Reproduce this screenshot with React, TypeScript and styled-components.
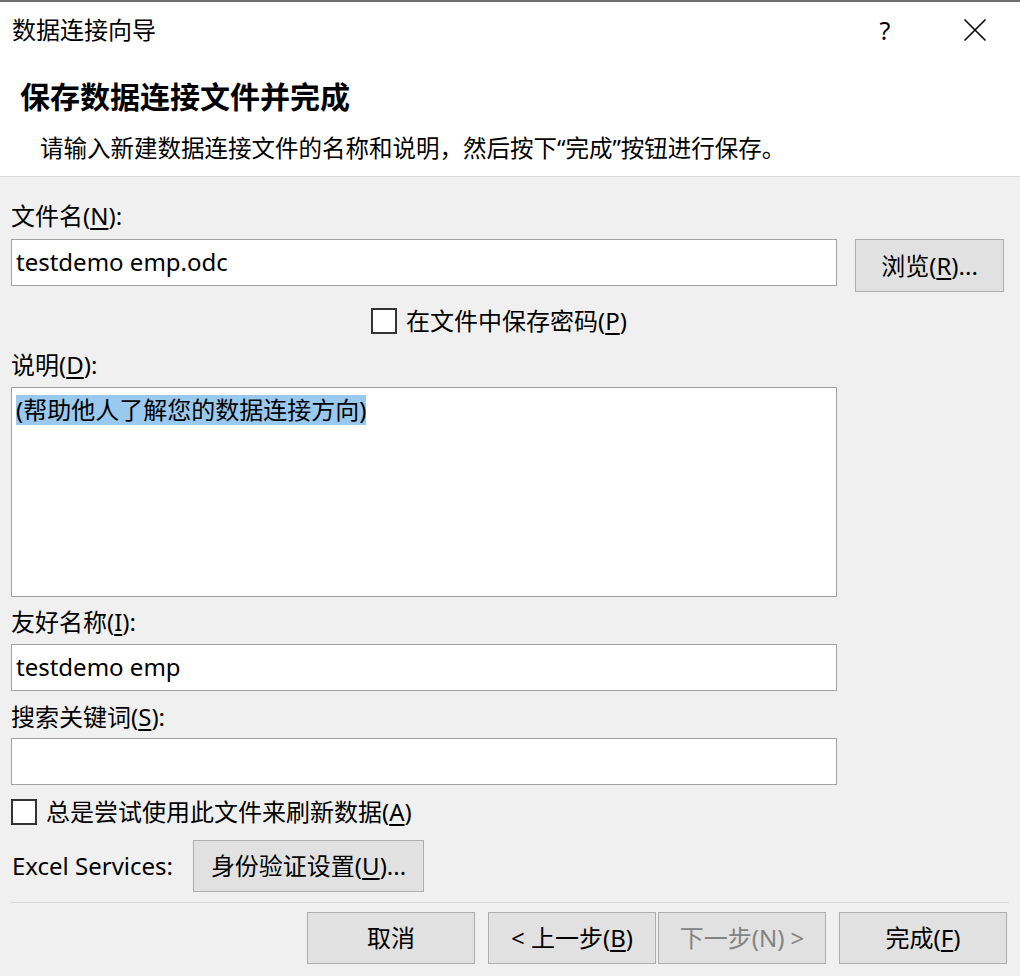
import React from 'react'
import styled, { createGlobalStyle } from 'styled-components'

const GlobalStyle = createGlobalStyle`
  html, body {
    margin: 0;
    padding: 0;
    background: #f0f0f0;
  }
  body {
    font-family: "Noto Sans", "Noto Sans CJK SC", sans-serif;
    color: #000;
  }
`

const Dialog = styled.div`
  width: 1020px;
  height: 976px;
  display: flex;
  flex-direction: column;
  background: #f0f0f0;
  overflow: hidden;
`

const BackdropStrip = styled.div`
  height: 2px;
  background: #6e6e6e;
`

const Header = styled.div`
  background: #fff;
  border-bottom: 1px solid #dadada;
  padding-bottom: 12px;
`

const TitleBar = styled.div`
  height: 56px;
  display: flex;
  align-items: center;
  padding-left: 12px;
`

const TitleText = styled.div`
  flex: 1;
  font-size: 24px;
  line-height: 32px;
`

const TitleButton = styled.div`
  width: 90px;
  height: 56px;
  display: flex;
  align-items: center;
  justify-content: center;
  font-size: 25px;
  line-height: 32px;
`

const Heading = styled.h1`
  margin: 19px 0 0 20px;
  font-size: 30px;
  line-height: 40px;
  font-weight: bold;
`

const Subtitle = styled.p`
  margin: 15px 0 0 40px;
  font-size: 23.5px;
  line-height: 32px;
`

const Body = styled.div`
  padding: 0 11px;
`

const Label = styled.div<{ $top: number }>`
  margin-top: ${(p) => p.$top}px;
  font-size: 24px;
  line-height: 32px;
  height: 32px;
`

const Key = styled.u`
  text-underline-offset: 3px;
`

const Row = styled.div<{ $top: number }>`
  margin-top: ${(p) => p.$top}px;
  display: flex;
  align-items: flex-start;
`

const TextBox = styled.div<{ $height?: number }>`
  box-sizing: border-box;
  width: 826px;
  height: ${(p) => p.$height ?? 47}px;
  background: #fff;
  border: 1px solid #a0a0a0;
  padding: 5px 4px;
  font-size: 24px;
  line-height: 34px;
`

const Selected = styled.span`
  background: #99c9ef;
  line-height: 30px;
  display: inline-block;
`

const Button = styled.div<{ $width?: number; $disabled?: boolean }>`
  box-sizing: border-box;
  width: ${(p) => p.$width ?? 168}px;
  height: 52px;
  background: #e1e1e1;
  border: 1px solid #adadad;
  display: flex;
  align-items: center;
  justify-content: center;
  font-size: 24px;
  line-height: 32px;
  color: ${(p) => (p.$disabled ? '#838383' : '#000')};
  white-space: nowrap;
`

const CheckRow = styled.label<{ $top: number; $indent: number }>`
  margin-top: ${(p) => p.$top}px;
  padding-left: ${(p) => p.$indent}px;
  display: flex;
  align-items: center;
  height: 32px;
  font-size: 24px;
  line-height: 32px;
`

const CheckBox = styled.span`
  box-sizing: border-box;
  width: 26px;
  height: 26px;
  border: 2px solid #333;
  background: #fff;
  margin-right: 9px;
  flex: none;
`

const ServicesLabel = styled.div`
  width: 181px;
  font-size: 24px;
  line-height: 52px;
  padding-left: 1px;
`

const Separator = styled.div<{ $top: number }>`
  margin-top: ${(p) => p.$top}px;
  height: 1px;
  background: #dadada;
`

const Footer = styled.div`
  margin-top: 9px;
  padding-right: 2px;
  display: flex;
  justify-content: flex-end;
  gap: 13px;
`

const StepGroup = styled.div`
  display: flex;
  gap: 2px;
`

const CloseIcon = () => (
  <svg width="24" height="24" viewBox="0 0 24 24">
    <path d="M1.5 1.5 L22.5 22.5 M22.5 1.5 L1.5 22.5" stroke="#000" strokeWidth="1.6" fill="none" />
  </svg>
)

export default function App() {
  return (
    <Dialog>
      <GlobalStyle />
      <BackdropStrip />
      <Header>
        <TitleBar>
          <TitleText>数据连接向导</TitleText>
          <TitleButton>?</TitleButton>
          <TitleButton>
            <CloseIcon />
          </TitleButton>
        </TitleBar>
        <Heading>保存数据连接文件并完成</Heading>
        <Subtitle>请输入新建数据连接文件的名称和说明，然后按下“完成”按钮进行保存。</Subtitle>
      </Header>

      <Body>
        <Label $top={23}>
          文件名(<Key>N</Key>):
        </Label>
        <Row $top={7}>
          <TextBox>testdemo emp.odc</TextBox>
          <Button $width={149} style={{ marginLeft: 18, height: 53 }}>
            浏览(<Key>R</Key>)...
          </Button>
        </Row>

        <CheckRow $top={13} $indent={360}>
          <CheckBox />
          在文件中保存密码(<Key>P</Key>)
        </CheckRow>

        <Label $top={12}>
          说明(<Key>D</Key>):
        </Label>
        <Row $top={6}>
          <TextBox $height={210}>
            <Selected>(帮助他人了解您的数据连接方向)</Selected>
          </TextBox>
        </Row>

        <Label $top={9}>
          友好名称(<Key>I</Key>):
        </Label>
        <Row $top={6}>
          <TextBox>testdemo emp</TextBox>
        </Row>

        <Label $top={10}>
          搜索关键词(<Key>S</Key>):
        </Label>
        <Row $top={5}>
          <TextBox />
        </Row>

        <CheckRow $top={11} $indent={0}>
          <CheckBox />
          总是尝试使用此文件来刷新数据(<Key>A</Key>)
        </CheckRow>

        <Row $top={12}>
          <ServicesLabel>Excel Services:</ServicesLabel>
          <Button $width={231}>
            身份验证设置(<Key>U</Key>)...
          </Button>
        </Row>

        <Separator $top={10} />

        <Footer>
          <Button>取消</Button>
          <StepGroup>
            <Button>
              &lt; 上一步(<Key>B</Key>)
            </Button>
            <Button $disabled>下一步(N) &gt;</Button>
          </StepGroup>
          <Button>
            完成(<Key>F</Key>)
          </Button>
        </Footer>
      </Body>
    </Dialog>
  )
}
